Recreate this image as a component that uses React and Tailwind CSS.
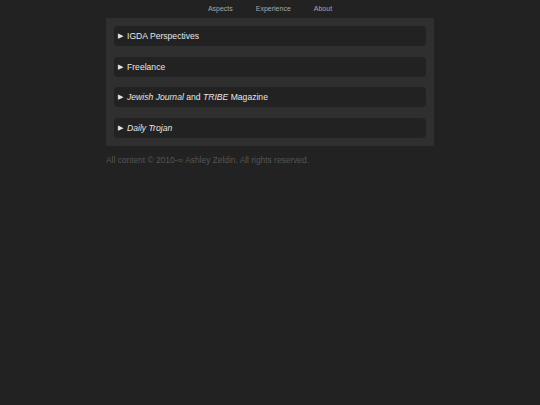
import React from "react";

const items = [
  <>IGDA Perspectives</>,
  <>Freelance</>,
  <>
    <i>Jewish Journal</i> and <i>TRIBE</i> Magazine
  </>,
  <>
    <i>Daily Trojan</i>
  </>,
];

export default function App() {
  return (
    <div
      className="min-h-[405px] w-full bg-[#222222] text-[#dddddd]"
      style={{ fontFamily: '"Liberation Sans", Arial, sans-serif' }}
    >
      {/* Nav */}
      <nav className="h-[18px] flex items-center justify-center gap-[23px] text-[7px] text-[#a8a8a8] pt-[1px]">
        <a>Aspects</a>
        <a>Experience</a>
        <a>About</a>
      </nav>

      <div className="w-[328px] mx-auto">
        {/* Sections */}
        <div className="bg-[#2f2f2f] p-[8px] flex flex-col gap-[10.5px]">
          {items.map((label, i) => (
            <div
              key={i}
              className="h-[20px] bg-[#222222] rounded-[4px] flex items-center px-[4px] pt-[1px] text-[8.6px] text-[#e6e6e6]"
            >
              <span className="text-[7px] mr-[4px]">▶</span>
              <span>{label}</span>
            </div>
          ))}
        </div>

        {/* Footer */}
        <p className="mt-[8px] text-[8.4px] text-[#555555]">
          All content © 2010-∞ Ashley Zeldin. All rights reserved.
        </p>
      </div>
    </div>
  );
}
